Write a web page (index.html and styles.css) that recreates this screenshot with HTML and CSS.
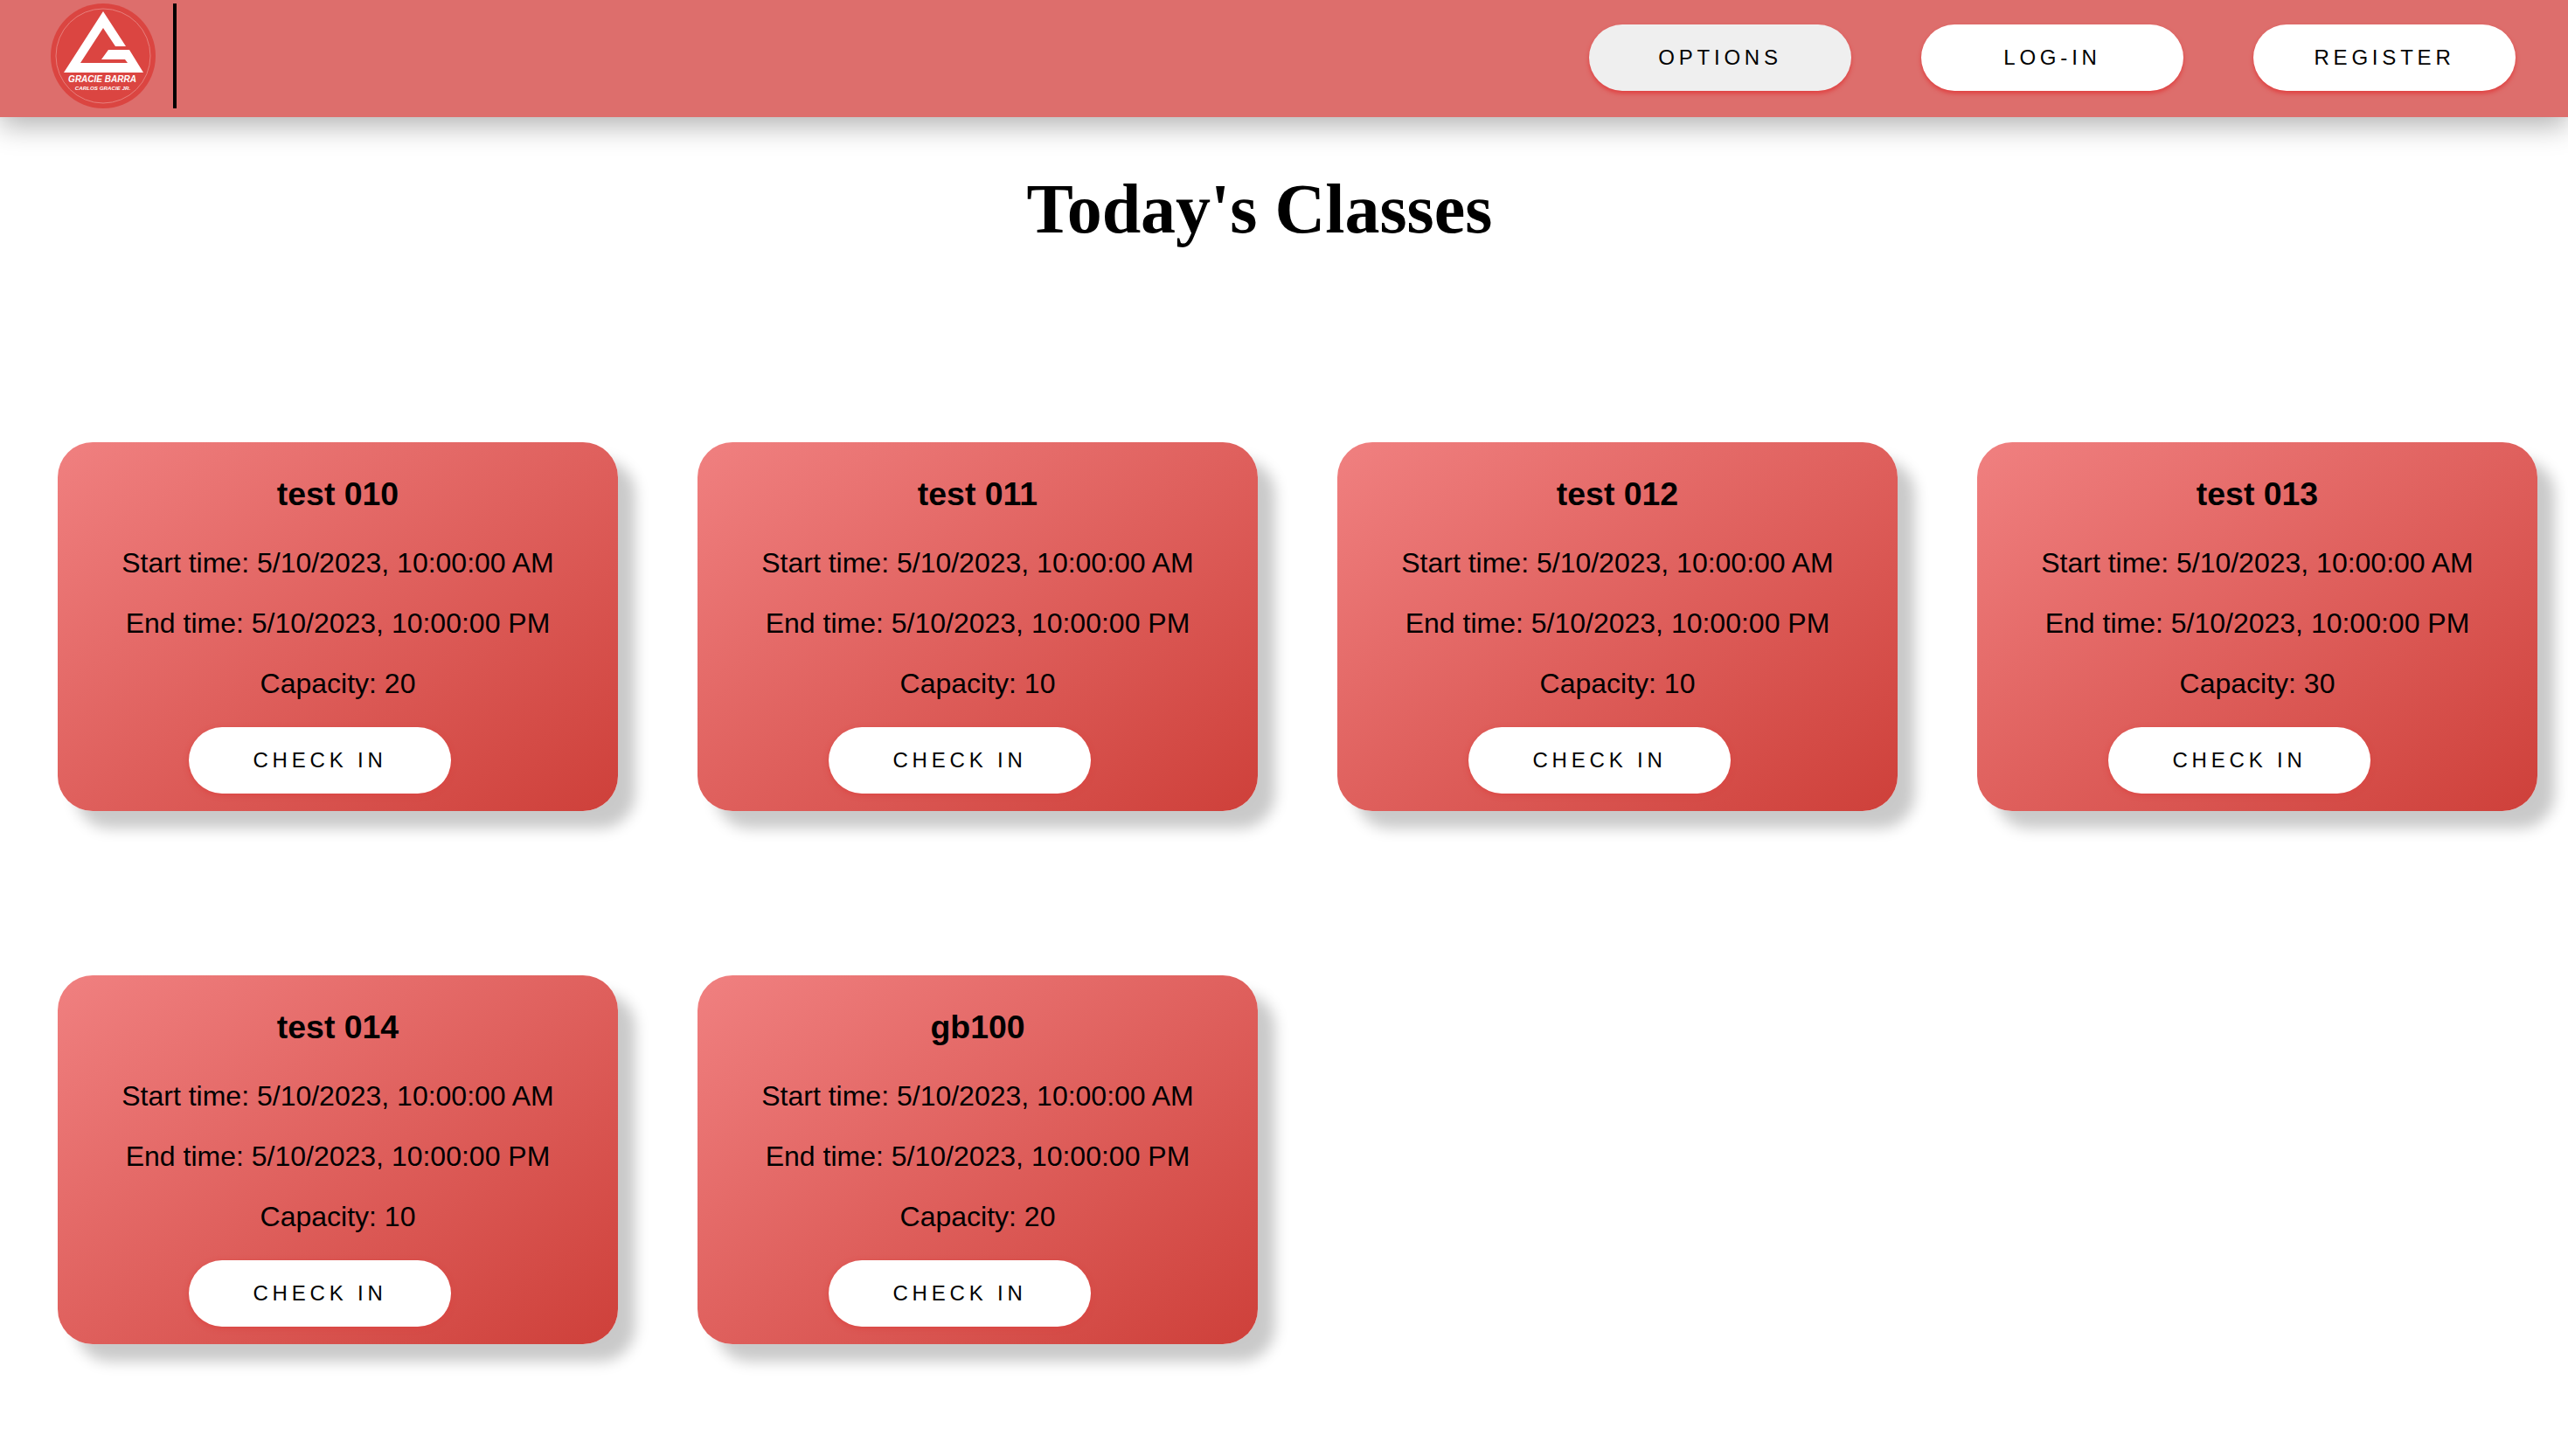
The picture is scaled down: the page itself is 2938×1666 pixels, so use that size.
FILE: index.html
```html
<!DOCTYPE html>
<html lang="en">
<head>
    <meta charset="UTF-8">
    <meta name="viewport" content="width=device-width, initial-scale=1.0">
    <title>Today's Classes</title>
    <link rel="stylesheet" href="styles.css">
</head>
<body>
    <nav class="navbar">
        <div class="brand">
            <svg class="logo" viewBox="58 4 120 120" width="120" height="120">
                <circle cx="118" cy="64" r="60" fill="#db4541"/>
                <circle cx="118" cy="64" r="54" fill="none" stroke="#e77f7c" stroke-width="1"/>
                <polygon fill="#fff" points="118,13 144,53 132,53 118,32 92,72 146,72 143,68 116,68 124,57 148,57 164,83 73,83"/>
                <text class="logo-name" x="117" y="94.300" text-anchor="middle">GRACIE BARRA</text>
                <text class="logo-sub" x="117.500" y="103.300" text-anchor="middle">CARLOS GRACIE JR.</text>
            </svg>
            <div class="divider"></div>
        </div>
        <div class="nav-links">
            <button class="btn btn-active">OPTIONS</button>
            <button class="btn">LOG-IN</button>
            <button class="btn">REGISTER</button>
        </div>
    </nav>

    <h1 class="page-title">Today's Classes</h1>

    <div class="class-list">
        <div class="class-card">
            <h3>test 010</h3>
            <p>Start time: 5/10/2023, 10:00:00 AM</p>
            <p>End time: 5/10/2023, 10:00:00 PM</p>
            <p>Capacity: 20</p>
            <button class="btn">CHECK IN</button>
        </div>
        <div class="class-card">
            <h3>test 011</h3>
            <p>Start time: 5/10/2023, 10:00:00 AM</p>
            <p>End time: 5/10/2023, 10:00:00 PM</p>
            <p>Capacity: 10</p>
            <button class="btn">CHECK IN</button>
        </div>
        <div class="class-card">
            <h3>test 012</h3>
            <p>Start time: 5/10/2023, 10:00:00 AM</p>
            <p>End time: 5/10/2023, 10:00:00 PM</p>
            <p>Capacity: 10</p>
            <button class="btn">CHECK IN</button>
        </div>
        <div class="class-card">
            <h3>test 013</h3>
            <p>Start time: 5/10/2023, 10:00:00 AM</p>
            <p>End time: 5/10/2023, 10:00:00 PM</p>
            <p>Capacity: 30</p>
            <button class="btn">CHECK IN</button>
        </div>
        <div class="class-card">
            <h3>test 014</h3>
            <p>Start time: 5/10/2023, 10:00:00 AM</p>
            <p>End time: 5/10/2023, 10:00:00 PM</p>
            <p>Capacity: 10</p>
            <button class="btn">CHECK IN</button>
        </div>
        <div class="class-card">
            <h3>gb100</h3>
            <p>Start time: 5/10/2023, 10:00:00 AM</p>
            <p>End time: 5/10/2023, 10:00:00 PM</p>
            <p>Capacity: 20</p>
            <button class="btn">CHECK IN</button>
        </div>
    </div>
</body>
</html>
```
FILE: styles.css
```css
body {
    margin: 0;
    background-color: #fff;
    color: #000;
    font-family: "Liberation Sans", Arial, sans-serif;
}

.navbar {
    display: flex;
    justify-content: space-between;
    height: 134px;
    background-color: #dd6e6c;
    box-shadow: 0 10px 30px rgba(0, 0, 0, 0.3);
}

.brand {
    display: flex;
    gap: 20px;
    padding: 4px 0 0 58px;
}

.logo {
    display: block;
}

.logo-name {
    fill: #fff;
    font-size: 10px;
    font-weight: bold;
    font-style: italic;
}

.logo-sub {
    fill: #fff;
    font-size: 6.2px;
    font-weight: bold;
    font-style: italic;
}

.divider {
    width: 4px;
    height: 120px;
    background-color: #000;
}

.nav-links {
    display: flex;
    gap: 80px;
    padding: 28px 60px 0 0;
}

.btn {
    display: block;
    width: 300px;
    height: 76px;
    padding: 0;
    border: none;
    border-radius: 40px;
    background-color: #fff;
    color: #000;
    font-family: "Liberation Sans", Arial, sans-serif;
    font-size: 24px;
    letter-spacing: 4.8px;
    box-shadow: 0 3px 5px #e04040;
}

.btn-active {
    background-color: #efefef;
}

.page-title {
    margin: 59px 56px 0 0;
    font-family: "Liberation Serif", "Times New Roman", serif;
    font-size: 80px;
    line-height: 92px;
    font-weight: bold;
    text-align: center;
}

.class-list {
    display: flex;
    flex-wrap: wrap;
    gap: 188px 91px;
    padding: 221px 0 80px 66px;
}

.class-card {
    width: 641px;
    height: 422px;
    box-sizing: border-box;
    padding-top: 38px;
    border-radius: 40px;
    background: linear-gradient(to bottom right, #f08080, #ce403a);
    box-shadow: 20px 20px 16px rgba(0, 0, 0, 0.21);
    text-align: center;
}

.class-card h3 {
    margin: 0 0 39px;
    font-size: 37.44px;
    line-height: 43px;
}

.class-card p {
    margin: 0 0 32px;
    font-size: 32px;
    line-height: 37px;
}

.class-card .btn {
    margin: -1px 0 0 150px;
    box-shadow: 0 2px 6px rgba(219, 69, 65, 0.9);
}
```
